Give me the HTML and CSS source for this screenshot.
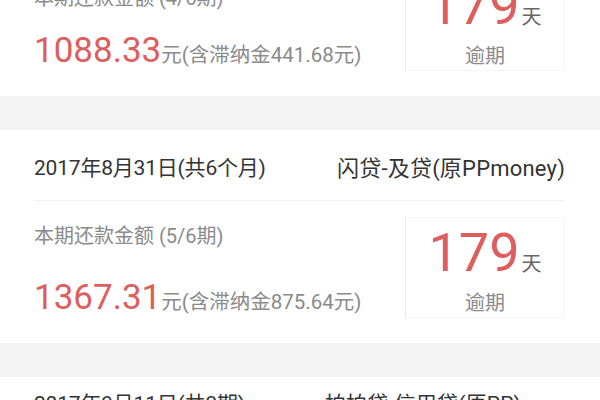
FILE: index.html
```html
<!DOCTYPE html>
<html lang="zh-CN">
<head>
<meta charset="utf-8">
<title>逾期账单</title>
<link rel="stylesheet" href="styles.css">
</head>
<body>
<div class="list">
  <section class="card">
    <div class="head">
      <span class="date">2017年7月31日(共6个月)</span>
      <span class="lender">闪贷-及贷(原PPmoney)</span>
    </div>
    <div class="body">
      <div class="info info-low">
        <div class="label">本期还款金额 (4/6期)</div>
        <div class="amount"><span class="num">1088.33</span><span class="unit">元(含滞纳金441.68元)</span></div>
      </div>
      <div class="overdue">
        <div class="days"><span class="dnum">179</span><span class="dunit">天</span></div>
        <div class="dlabel">逾期</div>
      </div>
    </div>
  </section>
  <section class="card">
    <div class="head">
      <span class="date">2017年8月31日(共6个月)</span>
      <span class="lender">闪贷-及贷(原PPmoney)</span>
    </div>
    <div class="body">
      <div class="info">
        <div class="label">本期还款金额 (5/6期)</div>
        <div class="amount"><span class="num">1367.31</span><span class="unit">元(含滞纳金875.64元)</span></div>
      </div>
      <div class="overdue">
        <div class="days"><span class="dnum">179</span><span class="dunit">天</span></div>
        <div class="dlabel">逾期</div>
      </div>
    </div>
  </section>
  <section class="card">
    <div class="head head-tight">
      <span class="date">2017年9月11日(共3期)</span>
      <span class="lender">拍拍贷-信用贷(原PP)</span>
    </div>
  </section>
</div>
</body>
</html>
```
FILE: styles.css
```css
html, body {
  margin: 0;
  padding: 0;
}
body {
  width: 600px;
  height: 400px;
  overflow: hidden;
  background: #f3f3f3;
  font-family: Roboto, "Noto Sans CJK SC", sans-serif;
}
.list {
  display: flex;
  flex-direction: column;
  gap: 34px;
  margin-top: -117px;
}
.card {
  background: #fff;
  height: 213px;
  padding: 0 35px 0 34px;
  box-sizing: border-box;
  display: flex;
  flex-direction: column;
}
.head {
  height: 71px;
  box-sizing: border-box;
  border-bottom: 1px solid #efefef;
  display: flex;
  justify-content: space-between;
  align-items: center;
  padding-top: 2px;
  font-size: 21px;
  color: #333;
}
.date {
  letter-spacing: -0.2px;
}
.lender {
  font-size: 22px;
  letter-spacing: 0.2px;
}
.head-tight {
  align-items: flex-start;
  justify-content: flex-start;
  gap: 80px;
  padding-top: 10px;
}
.head-tight .lender {
  font-size: 21px;
}
.body {
  flex: 1;
  display: flex;
  justify-content: space-between;
  padding-top: 16px;
  box-sizing: border-box;
}
.info {
  padding-top: 5px;
}
.label {
  font-size: 20px;
  line-height: 28px;
  color: #8a8a8a;
  height: 28px;
}
.info-low .label {
  padding-top: 9px;
  margin-bottom: -9px;
}
.amount {
  margin-top: 28px;
  line-height: 40px;
  white-space: nowrap;
}
.num {
  font-size: 35px;
  color: #de5d5d;
}
.unit {
  font-size: 20.5px;
  color: #8a8a8a;
}
.overdue {
  width: 160px;
  height: 101px;
  box-sizing: border-box;
  border: 1px solid #f5f5f5;
  border-left-color: #e8e8e8;
  display: flex;
  flex-direction: column;
  align-items: center;
  padding-top: 8px;
}
.days {
  line-height: 54px;
  white-space: nowrap;
}
.dnum {
  font-size: 54px;
  color: #de5d5d;
}
.dunit {
  font-size: 20px;
  color: #666;
  margin-left: 2px;
}
.dlabel {
  margin-top: -2px;
  font-size: 20px;
  line-height: 24px;
  color: #8a8a8a;
}
```
